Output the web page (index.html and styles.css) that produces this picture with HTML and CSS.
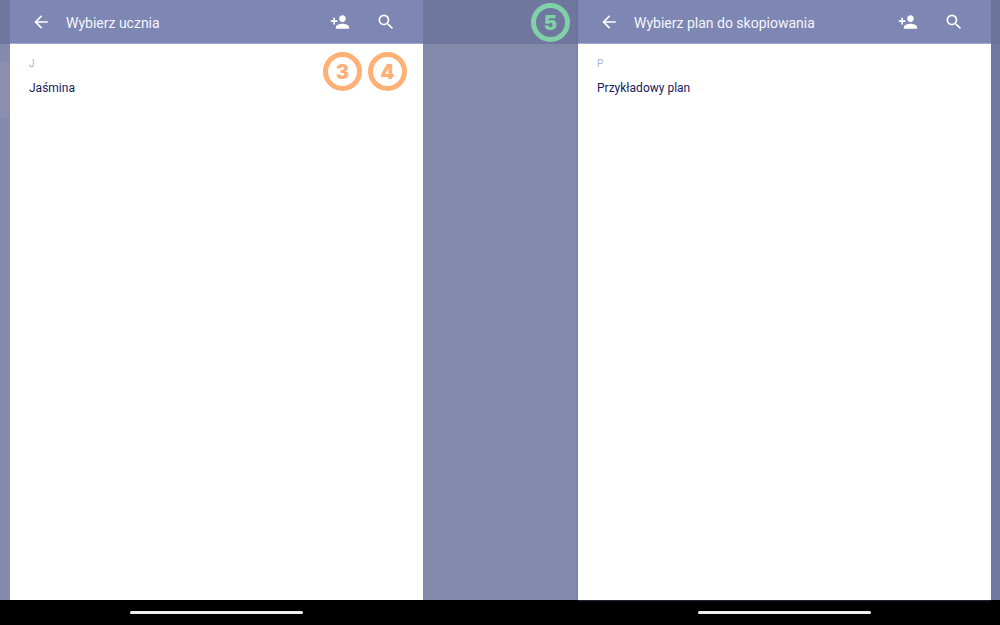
FILE: index.html
```html
<!DOCTYPE html>
<html lang="pl">
<head>
<meta charset="utf-8">
<meta name="viewport" content="width=device-width, initial-scale=1">
<title>Wybierz ucznia</title>
<link rel="stylesheet" href="styles.css">
</head>
<body>
<svg class="symbols" aria-hidden="true">
  <symbol id="back" viewBox="0 0 24 24"><path d="M20 11H7.83l5.59-5.59L12 4l-8 8 8 8 1.41-1.41L7.83 13H20z"/></symbol>
  <symbol id="add-person" viewBox="0 0 24 24"><path d="M15 12c2.210 0 4-1.790 4-4s-1.790-4-4-4-4 1.790-4 4 1.790 4 4 4zm-9-2V7H4v3H1v2h3v3h2v-3h3v-2zm9 4c-2.670 0-8 1.340-8 4v2h16v-2c0-2.660-5.330-4-8-4z"/></symbol>
  <symbol id="search" viewBox="0 0 24 24"><path d="M15.500 14h-.79l-.28-.27A6.471 6.471 0 0 0 16 9.500 6.500 6.500 0 1 0 9.500 16c1.610 0 3.090-.59 4.230-1.570l.27.28v.79l5 4.990L20.490 19zm-6 0C7.010 14 5 11.990 5 9.500S7.010 5 9.500 5 14 7.010 14 9.500 11.990 14 9.500 14z"/></symbol>
</svg>
<main class="stage">
  <div class="gutter gutter-left"><div class="gutter-bar"></div><div class="gutter-card"></div></div>
  <section class="panel">
    <header class="bar">
      <button class="icon-button" type="button" aria-label="Wstecz"><svg><use href="#back"/></svg></button>
      <h1 class="title">Wybierz ucznia</h1>
      <div class="actions">
        <button class="icon-button" type="button" aria-label="Dodaj ucznia"><svg><use href="#add-person"/></svg></button>
        <button class="icon-button" type="button" aria-label="Szukaj"><svg><use href="#search"/></svg></button>
      </div>
    </header>
    <div class="list">
      <h2 class="letter">J</h2>
      <button class="entry" type="button">Jaśmina</button>
    </div>
    <div class="badges badges-list"><span class="badge">3</span><span class="badge">4</span></div>
  </section>
  <div class="gutter">
    <div class="gutter-bar"></div>
    <div class="badges badges-bar"><span class="badge badge-green">5</span></div>
  </div>
  <section class="panel panel-raised">
    <header class="bar">
      <button class="icon-button" type="button" aria-label="Wstecz"><svg><use href="#back"/></svg></button>
      <h1 class="title">Wybierz plan do skopiowania</h1>
      <div class="actions">
        <button class="icon-button" type="button" aria-label="Dodaj ucznia"><svg><use href="#add-person"/></svg></button>
        <button class="icon-button" type="button" aria-label="Szukaj"><svg><use href="#search"/></svg></button>
      </div>
    </header>
    <div class="list">
      <h2 class="letter">P</h2>
      <button class="entry" type="button">Przykładowy plan</button>
    </div>
  </section>
  <div class="gutter gutter-right"><div class="gutter-bar"></div></div>
</main>
<footer class="system"><div class="handle handle-first"></div><div class="handle handle-second"></div></footer>
</body>
</html>
```
FILE: styles.css
```css
* {
  box-sizing: border-box;
}

body {
  margin: 0;
  min-height: 100vh;
  display: flex;
  flex-direction: column;
  background: #000;
  font-family: Roboto, "Noto Sans", sans-serif;
}

.symbols {
  display: none;
}

.stage,
.system {
  display: grid;
  grid-template-columns: 10fr 413fr 155fr 413fr 9fr;
}

.stage {
  flex: 1;
}

.gutter {
  position: relative;
  background: #848aac;
}

.gutter-bar {
  height: 44px;
  background: #70779e;
}

.gutter-card {
  height: 56px;
  margin-top: 18px;
  background: #8b8fad;
}

.gutter-right {
  background: #70789f;
}

.gutter-right .gutter-bar {
  background: #6c739a;
}

.panel {
  position: relative;
  background: #fff;
}

.panel-raised {
  box-shadow: 0 0 2px #5c648c;
}

.bar {
  display: flex;
  align-items: center;
  height: 44px;
  padding: 0 27px 0 21px;
  background: #7e86b3;
  border-bottom: 1px solid #a3a9c9;
  color: #f5f6fb;
}

.icon-button {
  display: block;
  padding: 0;
  border: 0;
  background: none;
  color: #fff;
}

.icon-button svg {
  display: block;
  width: 20px;
  height: 20px;
  fill: currentColor;
}

.title {
  flex: 1;
  margin: 0 0 0 15px;
  padding-top: 2px;
  font-size: 14px;
  line-height: 20px;
  font-weight: 400;
}

.actions {
  display: flex;
  gap: 26px;
}

.list {
  padding: 14px 19px;
}

.letter {
  margin: 0 0 8px;
  font-size: 10px;
  line-height: 12px;
  font-weight: 400;
  color: #a9b3cc;
}

.entry {
  display: block;
  padding: 0;
  border: 0;
  background: none;
  font: inherit;
  font-size: 12px;
  line-height: 20px;
  color: #18215a;
}

.badges {
  position: absolute;
  display: flex;
  gap: 6px;
}

.badges-list {
  top: 52px;
  right: 16px;
}

.badges-bar {
  top: 3px;
  right: 8px;
}

.badge {
  display: grid;
  place-items: center;
  width: 39px;
  height: 39px;
  border: 5px solid #ffb076;
  border-radius: 50%;
  color: #ffb076;
  font-family: Inter, sans-serif;
  font-size: 20px;
  line-height: 20px;
  font-weight: 900;
}

.badge-green {
  border-color: #80d0a8;
  color: #80d0a8;
}

.system {
  height: 25px;
  align-items: center;
}

.handle {
  height: 3px;
  width: 42%;
  border-radius: 2px;
  background: #eee;
  justify-self: center;
}

.handle-first {
  grid-column: 2;
}

.handle-second {
  grid-column: 4;
}
```
